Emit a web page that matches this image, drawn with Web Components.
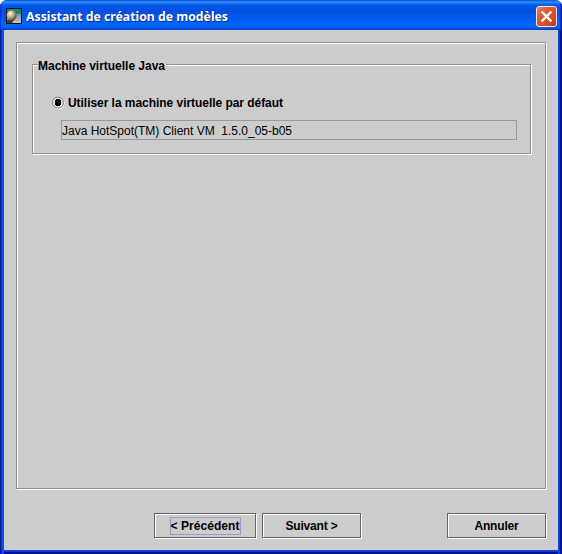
<!DOCTYPE html>
<html lang="fr">
<head>
<meta charset="utf-8">
<title>Assistant de création de modèles</title>
<style>
html,body{margin:0;height:100%;overflow:hidden;background:#fff}
body{font:bold 12px/14px "Liberation Sans",Arial,sans-serif;color:#000}
</style>
</head>
<body>
<wizard-window>
  <fit-text slot="title" width="202">Assistant de création de modèles</fit-text>
  <etched-panel>
    <titled-group>
      <fit-text slot="legend" width="127">Machine virtuelle Java</fit-text>
      <radio-option><fit-text width="215">Utiliser la machine virtuelle par défaut</fit-text></radio-option>
      <text-field><fit-text width="230">Java HotSpot(TM) Client VM&nbsp; 1.5.0_05-b05</fit-text></text-field>
    </titled-group>
  </etched-panel>
  <metal-button slot="actions" style="--w:102px" focused><fit-text width="69">&lt; Précédent</fit-text></metal-button>
  <metal-button slot="actions"><fit-text width="52">Suivant &gt;</fit-text></metal-button>
  <metal-button slot="actions" style="margin-left:auto"><fit-text width="44">Annuler</fit-text></metal-button>
</wizard-window>
<script>
class Base extends HTMLElement{
  constructor(){super();this.attachShadow({mode:'open'}).innerHTML=this.constructor.markup;}
}
// Text line whose letter spacing is tuned to a given width in pixels.
class FitText extends Base{
  static markup=`<style>:host{display:inline-block;white-space:nowrap}span{display:inline-block}</style><span><slot></slot></span>`;
  connectedCallback(){
    const s=this.shadowRoot.querySelector('span'),w=+this.getAttribute('width');
    this.style.width=w+'px';
    s.style.letterSpacing=(w-s.getBoundingClientRect().width)/this.textContent.length+'px';
  }
}
class WizardWindow extends Base{
  static markup=`<style>
  :host{display:flex;flex-direction:column;box-sizing:border-box;width:562px;height:554px;padding:0 4px 4px;border-radius:7px 7px 0 0;
    background:
    linear-gradient(90deg,#0019a0 0 1px,#0733d0 1px 2px,#1553e8 2px 3px,#0c50df 3px 4px,transparent 4px 558px,#0c47d8 558px 559px,#0838cc 559px 560px,#0018a4 560px 561px,#00107c 561px),
    linear-gradient(#0c47d8 0 551px,#0838cc 551px 552px,#0018a4 552px 553px,#00107c 553px);overflow:hidden}
  header{display:flex;align-items:center;flex:none;height:30px;margin:0 -4px;padding:2px 6px 0;box-sizing:border-box;
    background:linear-gradient(#0452d0 0,#1a6cf0 1px,#3590ff 2px,#0b68f0 4px,#0054e3 6px,#0050dc 12px,#0058ec 17px,#0064fc 23px,#0266ff 26px,#005df0 28px,#0047d4 29px,#003cc5 30px);
    box-shadow:inset 1px 0 #0831d9,inset -1px 0 #0019a0,inset -2px 0 #0838cc}
  .icon{flex:none;width:16px;height:16px;margin-right:4px}
  .title{font:bold 12.3px/18px "Noto Sans","Open Sans",sans-serif;color:#fff;text-shadow:1px 1px 0 #0a2a88;position:relative;top:1px}
  .close{flex:none;width:21px;height:21px;margin-left:auto;margin-right:-1px}
  main{flex:1;background:#ccc;display:flex;flex-direction:column;padding:12px 11px 11px 12px}
  footer{display:flex;gap:6px;margin-top:auto;padding-left:138px;padding-right:1px;padding-bottom:1px}
  </style>
  <header>
    <svg class="icon" viewBox="0 0 16 16"><defs><radialGradient id="b" cx=".35" cy=".3" r=".75"><stop offset="0" stop-color="#fff8dc"/><stop offset=".4" stop-color="#c8bd91"/><stop offset="1" stop-color="#4d4329"/></radialGradient><linearGradient id="g" x2="0" y2="1"><stop stop-color="#8a9298"/><stop offset="1" stop-color="#c5c3cb"/></linearGradient></defs>
    <path fill="#111" d="M0 0h16v16H0z"/><path fill="#16877c" d="M1 1h14v5H1z"/><path fill="url(#g)" d="M1 6h14v9H1z"/><path fill="#403e39" d="M1 12h7l-2 3H1z"/><circle cx="5.6" cy="7.6" r="5" fill="url(#b)"/></svg>
    <div class="title"><slot name="title"></slot></div>
    <svg class="close" viewBox="0 0 21 21"><defs><linearGradient id="r" x2="1" y2="1"><stop stop-color="#e48b70"/><stop offset=".3" stop-color="#da6040"/><stop offset=".75" stop-color="#d2481f"/><stop offset="1" stop-color="#b13209"/></linearGradient></defs><rect x=".5" y=".5" width="20" height="20" rx="2.5" fill="url(#r)" stroke="#f3e6ea"/><path d="M5.6 5.6l9.8 9.8M15.4 5.6l-9.8 9.8" stroke="#fff" stroke-width="2.2"/></svg>
  </header>
  <main><slot></slot><footer><slot name="actions"></slot></footer></main>`;
}
class EtchedPanel extends Base{
  static markup=`<style>:host{display:block;box-sizing:border-box;width:530px;height:447px;border:1px solid #929292;box-shadow:1px 1px #fff,inset 1px 1px #fff;padding:21px 14px 0 15px}</style><slot></slot>`;
}
class TitledGroup extends Base{
  static markup=`<style>:host{display:block;box-sizing:border-box;width:499px;height:90px;border:1px solid #929292;box-shadow:1px 1px #fff,inset 1px 1px #fff;padding:0 14px 0 18px}
  .legend{display:block;width:128px;height:14px;box-sizing:border-box;margin:-7px 0 0 -13px;background:#ccc;position:relative;top:1px}
  .body{display:flex;flex-direction:column;gap:10px;padding-top:24px}</style>
  <div class="legend"><slot name="legend"></slot></div><div class="body"><slot></slot></div>`;
}
class RadioOption extends Base{
  static markup=`<style>:host{display:flex;align-items:center;height:14px}svg{flex:none;width:14px;height:14px;margin-right:3px}</style>
  <svg viewBox="0 0 14 14"><circle cx="7.5" cy="7.1" r="5.6" fill="none" stroke="#fff"/><circle cx="7" cy="6.6" r="5.4" fill="none" stroke="#666"/><circle cx="7" cy="6.6" r="4.4" fill="none" stroke="#fff" stroke-width=".8"/><path d="M5 3h4v1h1v5H9v1H5V9H4V4h1z" fill="#000"/></svg><slot></slot>`;
}
class TextField extends Base{
  static markup=`<style>:host{display:flex;align-items:center;box-sizing:border-box;width:456px;height:20px;margin-left:10px;border:1px solid #999;padding:1px 0 0;font-weight:normal}</style><slot></slot>`;
}
class MetalButton extends Base{
  static markup=`<style>:host{display:flex;align-items:center;justify-content:center;box-sizing:border-box;width:var(--w,99px);height:25px;border:1px solid #666;box-shadow:1px 1px #fff,inset 1px 1px #fff}
  .f{border:1px solid transparent;height:16px;line-height:17px;padding:0}
  :host([focused]) .f{border-color:#99c}</style><div class="f"><slot></slot></div>`;
}
customElements.define('fit-text',FitText);
customElements.define('wizard-window',WizardWindow);
customElements.define('etched-panel',EtchedPanel);
customElements.define('titled-group',TitledGroup);
customElements.define('radio-option',RadioOption);
customElements.define('text-field',TextField);
customElements.define('metal-button',MetalButton);
// Styles of the enclosing elements are final only now, so spacing is computed afresh.
document.querySelectorAll('fit-text').forEach(t=>{t.shadowRoot.querySelector('span').style.letterSpacing='0';t.connectedCallback();});
</script>
</body>
</html>
